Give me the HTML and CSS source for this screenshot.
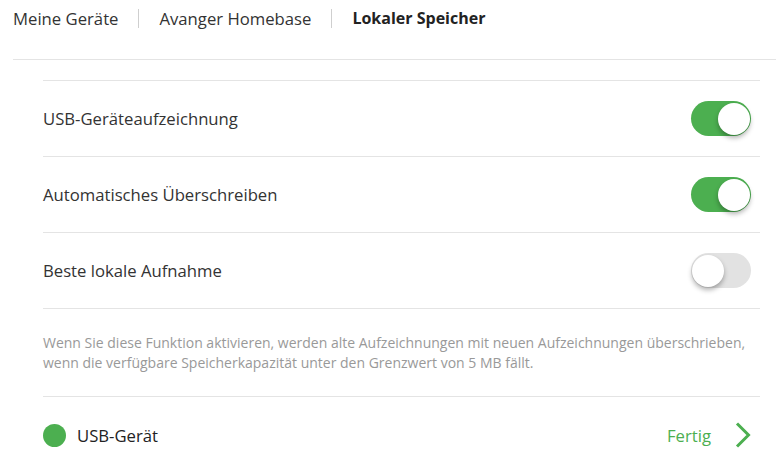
FILE: index.html
```html
<!DOCTYPE html>
<html lang="de">
<head>
<meta charset="utf-8">
<link rel="stylesheet" href="styles.css">
</head>
<body>
<header class="tabs">
  <span class="tab">Meine Geräte</span>
  <span class="tab">Avanger Homebase</span>
  <span class="tab active">Lokaler Speicher</span>
</header>
<section class="settings">
  <div class="row">
    <span class="label">USB-Geräteaufzeichnung</span>
    <span class="toggle on"><span class="knob"></span></span>
  </div>
  <div class="row">
    <span class="label">Automatisches Überschreiben</span>
    <span class="toggle on"><span class="knob"></span></span>
  </div>
  <div class="row">
    <span class="label">Beste lokale Aufnahme</span>
    <span class="toggle"><span class="knob"></span></span>
  </div>
  <p class="desc">Wenn Sie diese Funktion aktivieren, werden alte Aufzeichnungen mit neuen Aufzeichnungen überschrieben, wenn die verfügbare Speicherkapazität unter den Grenzwert von 5 MB fällt.</p>
  <div class="row device">
    <span class="device-name"><span class="dot"></span>USB-Gerät</span>
    <span class="status">Fertig
      <svg class="chev" width="16" height="26" viewBox="0 0 16 26"><path d="M2 1.5 L13.5 13 L2 24.5" fill="none" stroke="#4caf50" stroke-width="3"/></svg>
    </span>
  </div>
</section>
</body>
</html>
```
FILE: styles.css
```css
* { box-sizing: border-box; }
body {
  margin: 0;
  font-family: "Open Sans", "Liberation Sans", sans-serif;
  color: #333;
  background: #fff;
}
.tabs {
  height: 60px;
  border-bottom: 1px solid #e4e4e4;
  margin-left: 13px;
  display: flex;
  align-items: flex-start;
  padding-top: 9px;
}
.tab {
  font-size: 16.7px;
  line-height: 19px;
  padding: 0 20px;
  border-left: 1px solid #cfcfcf;
  color: #333;
}
.tab:first-child { padding-left: 0; border-left: none; }
.tab.active { font-weight: 700; color: #222; font-size: 16px; }
.settings {
  margin: 20px 16px 0 43px;
  border-top: 1px solid #e4e4e4;
}
.row {
  height: 76px;
  border-bottom: 1px solid #e4e4e4;
  display: flex;
  align-items: center;
  justify-content: space-between;
  padding-right: 9px;
}
.label { font-size: 16.7px; color: #333; }
.toggle {
  width: 60px;
  height: 35px;
  border-radius: 18px;
  background: #e2e2e2;
  display: flex;
  align-items: center;
  padding: 0 1px;
}
.toggle.on { background: #4caf50; justify-content: flex-end; }
.knob {
  width: 32px;
  height: 32px;
  border-radius: 50%;
  background: #fff;
  box-shadow: 0 3px 5px rgba(0,0,0,0.3);
}
.desc {
  margin: 0;
  padding: 24px 0 23px;
  font-size: 14px;
  line-height: 20px;
  color: #999;
  border-bottom: 1px solid #e4e4e4;
}
.row.device { border-bottom: none; height: 76px; }
.device-name {
  display: flex;
  align-items: center;
  font-size: 16.7px;
  color: #222;
}
.dot {
  width: 23px;
  height: 23px;
  border-radius: 50%;
  background: #4caf50;
  margin-right: 11px;
}
.status {
  display: flex;
  align-items: center;
  font-size: 16.7px;
  color: #4caf50;
}
.chev { margin-left: 24px; }
```
